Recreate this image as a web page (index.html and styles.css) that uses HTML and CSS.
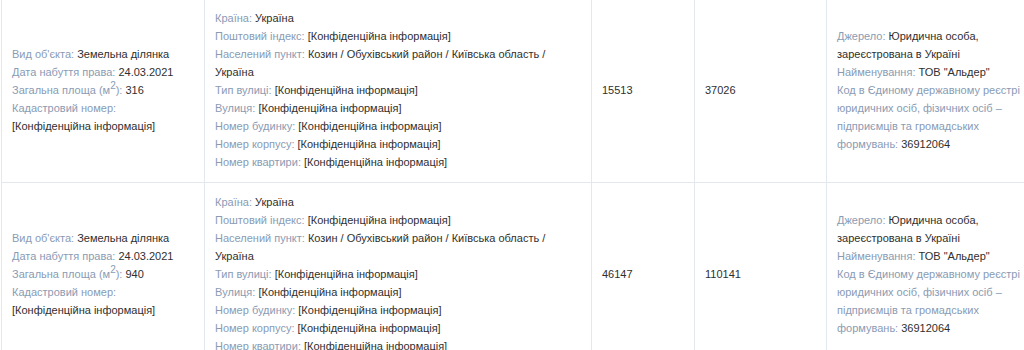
FILE: index.html
```html
<!DOCTYPE html>
<html lang="uk">
<head>
<meta charset="utf-8">
<title>Об'єкти</title>
<link rel="stylesheet" href="styles.css">
</head>
<body>
<div class="table">
  <div class="row">
    <div class="cell">
      <div><span class="lbl">Вид об'єкта:</span> Земельна ділянка</div>
      <div><span class="lbl">Дата набуття права:</span> 24.03.2021</div>
      <div><span class="lbl">Загальна площа (м<sup>2</sup>):</span> 316</div>
      <div><span class="lbl">Кадастровий номер:</span> [Конфіденційна інформація]</div>
    </div>
    <div class="cell">
      <div><span class="lbl">Країна:</span> Україна</div>
      <div><span class="lbl">Поштовий індекс:</span> [Конфіденційна інформація]</div>
      <div><span class="lbl">Населений пункт:</span> Козин / Обухівський район / Київська область / Україна</div>
      <div><span class="lbl">Тип вулиці:</span> [Конфіденційна інформація]</div>
      <div><span class="lbl">Вулиця:</span> [Конфіденційна інформація]</div>
      <div><span class="lbl">Номер будинку:</span> [Конфіденційна інформація]</div>
      <div><span class="lbl">Номер корпусу:</span> [Конфіденційна інформація]</div>
      <div><span class="lbl">Номер квартири:</span> [Конфіденційна інформація]</div>
    </div>
    <div class="cell">15513</div>
    <div class="cell">37026</div>
    <div class="cell">
      <div><span class="lbl">Джерело:</span> Юридична особа, зареєстрована в Україні</div>
      <div><span class="lbl">Найменування:</span> ТОВ "Альдер"</div>
      <div><span class="lbl">Код в Єдиному державному реєстрі юридичних осіб, фізичних осіб – підприємців та громадських формувань:</span> 36912064</div>
    </div>
  </div>
  <div class="row">
    <div class="cell">
      <div><span class="lbl">Вид об'єкта:</span> Земельна ділянка</div>
      <div><span class="lbl">Дата набуття права:</span> 24.03.2021</div>
      <div><span class="lbl">Загальна площа (м<sup>2</sup>):</span> 940</div>
      <div><span class="lbl">Кадастровий номер:</span> [Конфіденційна інформація]</div>
    </div>
    <div class="cell">
      <div><span class="lbl">Країна:</span> Україна</div>
      <div><span class="lbl">Поштовий індекс:</span> [Конфіденційна інформація]</div>
      <div><span class="lbl">Населений пункт:</span> Козин / Обухівський район / Київська область / Україна</div>
      <div><span class="lbl">Тип вулиці:</span> [Конфіденційна інформація]</div>
      <div><span class="lbl">Вулиця:</span> [Конфіденційна інформація]</div>
      <div><span class="lbl">Номер будинку:</span> [Конфіденційна інформація]</div>
      <div><span class="lbl">Номер корпусу:</span> [Конфіденційна інформація]</div>
      <div><span class="lbl">Номер квартири:</span> [Конфіденційна інформація]</div>
    </div>
    <div class="cell">46147</div>
    <div class="cell">110141</div>
    <div class="cell">
      <div><span class="lbl">Джерело:</span> Юридична особа, зареєстрована в Україні</div>
      <div><span class="lbl">Найменування:</span> ТОВ "Альдер"</div>
      <div><span class="lbl">Код в Єдиному державному реєстрі юридичних осіб, фізичних осіб – підприємців та громадських формувань:</span> 36912064</div>
    </div>
  </div>
</div>
</body>
</html>
```

FILE: styles.css
```css
html, body {
  margin: 0;
  padding: 0;
  background: #ffffff;
  overflow: hidden;
}

body {
  font-family: "Liberation Sans", Arial, sans-serif;
  font-size: 11px;
  line-height: 18px;
  color: #2f2f2f;
}

.table {
  margin-top: -2px;
  margin-left: 1px;
  width: 1100px;
}

.row {
  display: grid;
  grid-template-columns: 203px 387px 103px 132px 211px;
  border-top: 1px solid #e3e7ee;
}

.cell {
  border-left: 1px solid #e3e7ee;
  padding: 10px 10px 11px;
  display: flex;
  flex-direction: column;
  justify-content: center;
}

.lbl {
  color: #8a9bb4;
}

sup {
  font-size: 10px;
  line-height: 0;
  vertical-align: 5px;
}
```
